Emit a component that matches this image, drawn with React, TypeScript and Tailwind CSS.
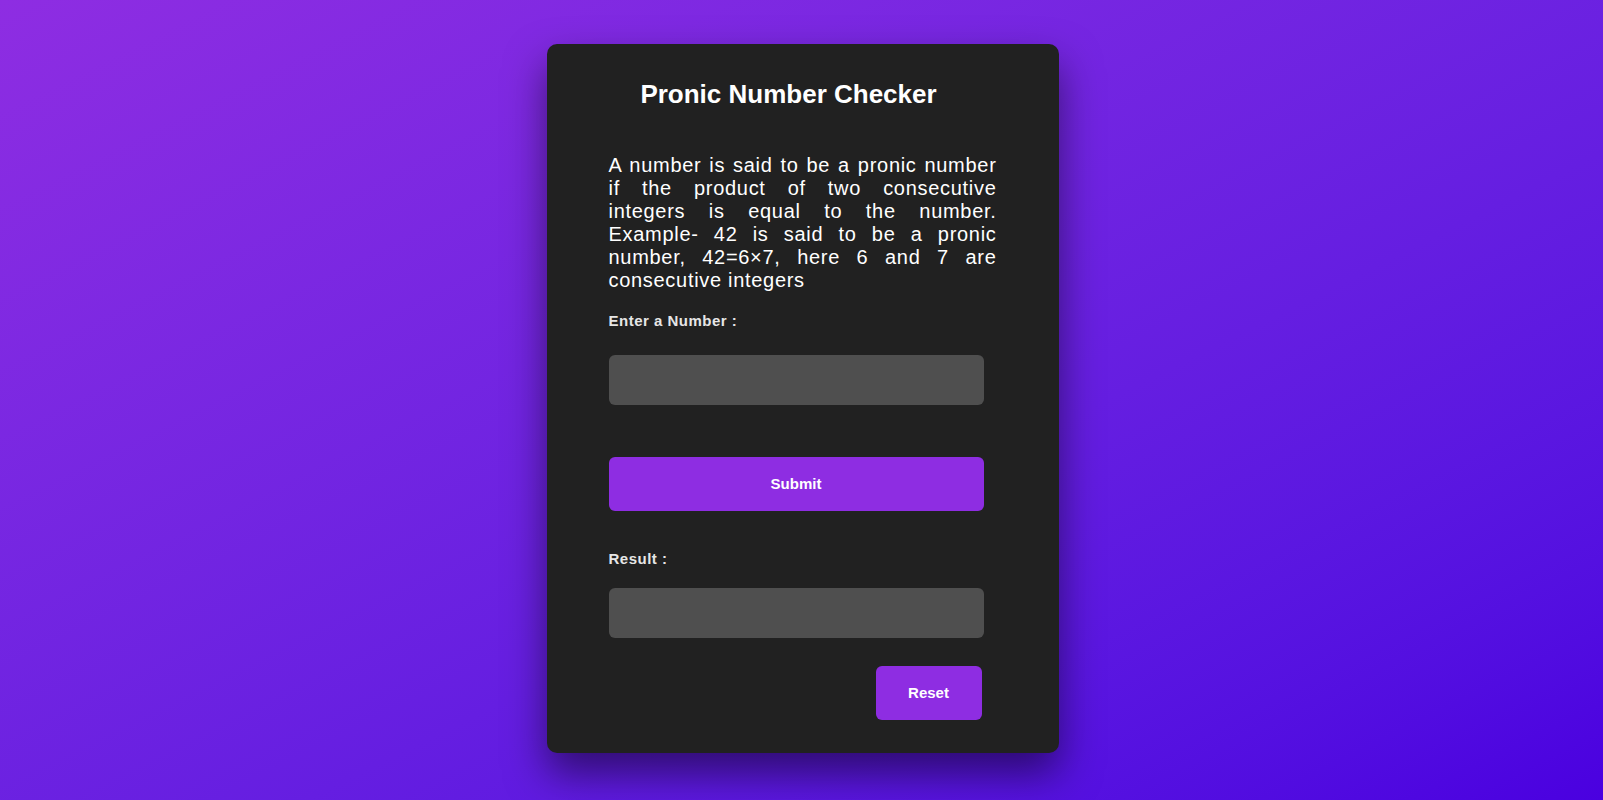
import React, { useState } from 'react';

const App: React.FC = () => {
  const [value, setValue] = useState('');
  const [result, setResult] = useState('');

  const check = () => {
    const n = parseInt(value, 10);
    if (isNaN(n)) {
      setResult('');
      return;
    }
    let ok = false;
    for (let i = 0; i * (i + 1) <= n; i++) {
      if (i * (i + 1) === n) ok = true;
    }
    setResult(ok ? `${n} is a pronic number` : `${n} is not a pronic number`);
  };

  return (
    <div
      className="min-h-screen w-full flex items-start justify-center pt-[44px] pl-[2px] bg-gradient-to-br from-[#8e2de2] to-[#4a00e0]"
      style={{ fontFamily: '"Liberation Sans", Arial, sans-serif' }}
    >
      <div className="w-[512px] h-[709px] bg-[#212121] rounded-[10px] shadow-[0_20px_40px_rgba(0,0,0,0.5)] pt-[35px] px-[62px] flex flex-col">
        {/* Title */}
        <h1 className="text-[26px] font-bold text-white text-center pr-[28px] leading-[30px]">
          Pronic Number Checker
        </h1>

        {/* Description */}
        <p className="mt-[45px] text-[20px] leading-[23px] tracking-[0.7px] text-white text-justify">
          A number is said to be a pronic number if the product of two consecutive integers is equal to the number.
          Example- 42 is said to be a pronic number, 42=6×7, here 6 and 7 are consecutive integers
        </p>

        <label className="mt-[20px] text-[15px] leading-[17px] font-bold text-[#e6e6e6] tracking-[0.5px]">
          Enter a Number :
        </label>
        <input
          type="number"
          value={value}
          onChange={(e) => setValue(e.target.value)}
          className="mt-[26px] w-[375px] h-[50px] rounded-[6px] bg-[#4f4f4f] text-white text-[16px] px-3 outline-none"
        />

        <button
          onClick={check}
          className="mt-[52px] w-[375px] h-[54px] rounded-[6px] bg-[#8e2de2] text-white text-[15px] font-bold"
        >
          Submit
        </button>

        <label className="mt-[39px] text-[15px] leading-[17px] font-bold text-[#e6e6e6] tracking-[0.5px]">
          Result :
        </label>
        <div className="mt-[21px] w-[375px] h-[50px] rounded-[6px] bg-[#4f4f4f] text-white text-[16px] px-3 flex items-center">
          {result}
        </div>

        <div className="w-[375px] flex justify-end mt-[28px]">
          <button
            onClick={() => {
              setValue('');
              setResult('');
            }}
            className="w-[106px] h-[54px] mr-[2px] rounded-[6px] bg-[#8e2de2] text-white text-[15px] font-bold"
          >
            Reset
          </button>
        </div>
      </div>
    </div>
  );
};

export default App;
